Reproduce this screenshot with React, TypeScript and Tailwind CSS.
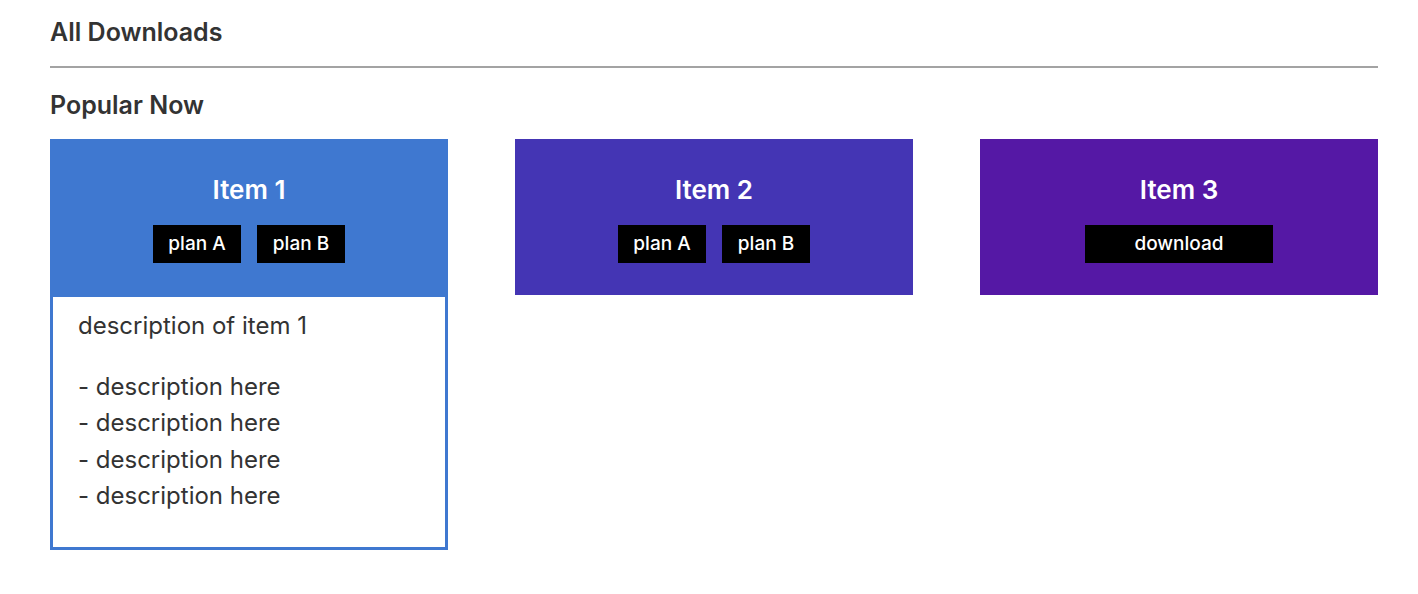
import { useState } from "react";

// item type
type Item = {
  id: number;
  name: string;
  color: string;
  buttons: string[];
  wide?: boolean;
};

const items: Item[] = [
  { id: 1, name: "Item 1", color: "bg-[#3f78d0]", buttons: ["plan A", "plan B"] },
  { id: 2, name: "Item 2", color: "bg-[#4435b4]", buttons: ["plan A", "plan B"] },
  { id: 3, name: "Item 3", color: "bg-[#5518a5]", buttons: ["download"], wide: true },
];

function App() {
  const [openId] = useState<number>(1);

  return (
    <div
      className="bg-white min-h-screen pl-[50px] pr-[40px] pt-[14px] text-[#333]"
      style={{ fontFamily: "Inter, 'Noto Sans', sans-serif" }}
    >
      <h1 className="text-[25px] font-semibold leading-[36px]">All Downloads</h1>
      <hr className="mt-[16px] border-0 h-[2px] bg-[#a3a3a3]" />
      <h2 className="mt-[19px] text-[25px] font-semibold leading-[36px]">Popular Now</h2>

      <div className="mt-[16px] grid grid-cols-3 gap-[67px] items-start">
        {items.map((item) => (
          <div
            key={item.id}
            className={openId === item.id ? "border-[3px] border-[#3f78d0]" : ""}
          >
            <div
              className={`${item.color} flex flex-col items-center ${
                openId === item.id ? "h-[155px] pt-[33px]" : "h-[156px] pt-[36px]"
              }`}
            >
              <h3 className="text-white text-[26px] font-semibold leading-[30px]">
                {item.name}
              </h3>
              <div className="flex gap-[16px] mt-[20px]">
                {item.buttons.map((b) => (
                  <button
                    key={b}
                    className={`bg-black text-white text-[19px] font-medium h-[38px] ${
                      item.wide ? "w-[188px]" : "w-[88px]"
                    }`}
                  >
                    {b}
                  </button>
                ))}
              </div>
            </div>
            {openId === item.id && (
              <div className="pl-[25px] pt-[11px] pb-[32px] text-[24px] leading-[36.5px] text-[#333]">
                <p>description of item 1</p>
                <ul className="mt-[24px]">
                  <li>- description here</li>
                  <li>- description here</li>
                  <li>- description here</li>
                  <li>- description here</li>
                </ul>
              </div>
            )}
          </div>
        ))}
      </div>
    </div>
  );
}

export default App;
